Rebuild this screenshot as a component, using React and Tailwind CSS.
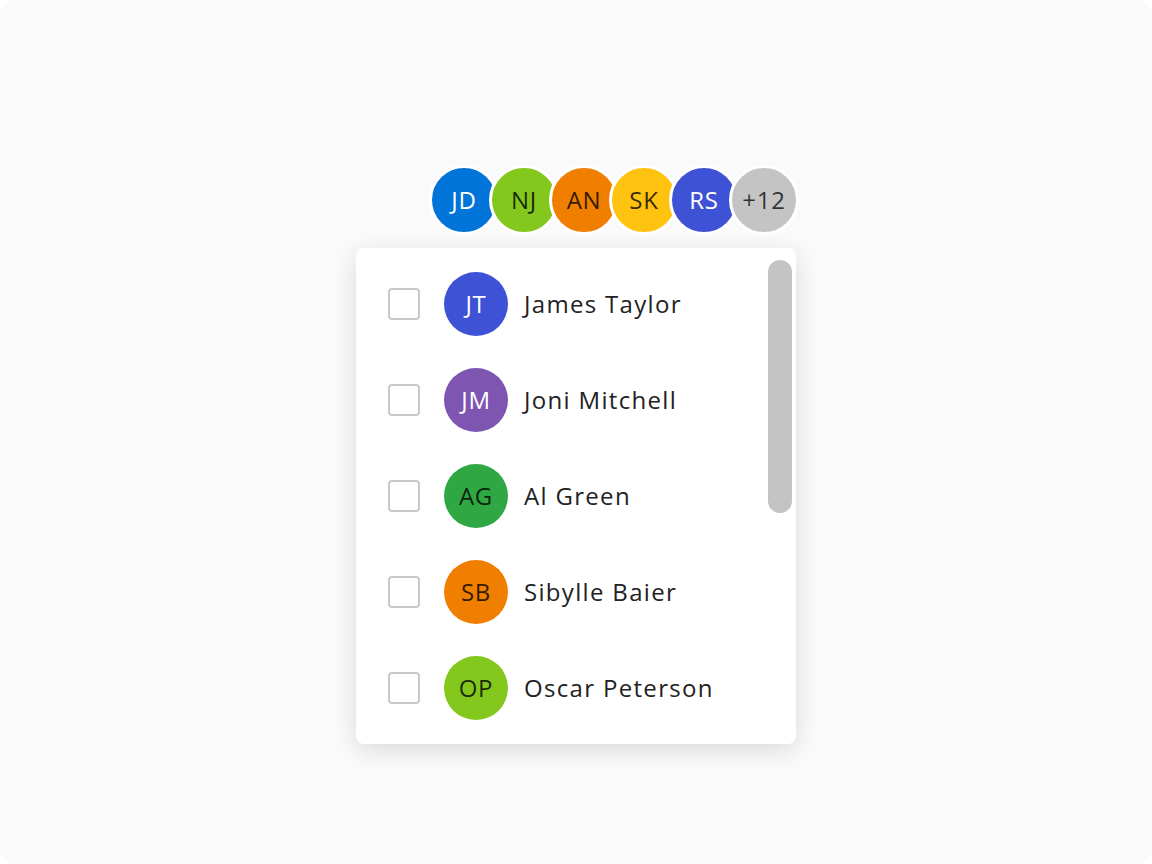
import React from "react";

const stack = [
  { initials: "JD", bg: "bg-[#0074d9]", fg: "text-white" },
  { initials: "NJ", bg: "bg-[#84c81e]", fg: "text-black/80" },
  { initials: "AN", bg: "bg-[#f07f00]", fg: "text-black/80" },
  { initials: "SK", bg: "bg-[#ffc20e]", fg: "text-black/80" },
  { initials: "RS", bg: "bg-[#3d52d5]", fg: "text-white" },
  { initials: "+12", bg: "bg-[#c4c4c4]", fg: "text-black/75" },
];

const people = [
  { name: "James Taylor", initials: "JT", bg: "bg-[#3d52d5]", fg: "text-white" },
  { name: "Joni Mitchell", initials: "JM", bg: "bg-[#7e56b1]", fg: "text-white" },
  { name: "Al Green", initials: "AG", bg: "bg-[#2fa844]", fg: "text-black/80" },
  { name: "Sibylle Baier", initials: "SB", bg: "bg-[#f07f00]", fg: "text-black/80" },
  { name: "Oscar Peterson", initials: "OP", bg: "bg-[#84c81e]", fg: "text-black/80" },
];

export default function App() {
  return (
    <div className="bg-white w-[1152px] h-[864px]">
      <div
        className="w-full h-full bg-[#fafafa] rounded-2xl flex justify-center pt-[165px]"
        style={{ fontFamily: '"Open Sans", "Noto Sans", sans-serif' }}
      >
        <div className="w-[440px] flex flex-col">
          {/* AVATAR STACK */}
          <div className="flex justify-end -mr-[3px]">
            {stack.map((a, i) => (
              <div
                key={a.initials}
                className={`w-[70px] h-[70px] rounded-full border-[3px] border-white flex items-center justify-center text-[24px] tracking-[0.03em] ${a.bg} ${a.fg} ${i === 0 ? "" : "-ml-[10px]"}`}
              >
                {a.initials}
              </div>
            ))}
          </div>

          {/* DROPDOWN */}
          <div className="mt-[13px] bg-white rounded-lg shadow-[0_6px_24px_rgba(0,0,0,0.13)] flex py-2 pl-8 pr-1">
            <div className="flex-1 flex flex-col">
              {people.map((p) => (
                <div key={p.name} className="h-24 flex items-center">
                  <div className="w-8 h-8 rounded border-2 border-[#c8c8c8]" />
                  <div
                    className={`ml-6 w-16 h-16 rounded-full flex items-center justify-center text-[24px] tracking-[0.03em] ${p.bg} ${p.fg}`}
                  >
                    {p.initials}
                  </div>
                  <div className="ml-4 text-[24px] tracking-[0.055em] text-[#222]">
                    {p.name}
                  </div>
                </div>
              ))}
            </div>
            <div className="pt-1">
              <div className="w-6 h-[253px] rounded-full bg-[#c4c4c4]" />
            </div>
          </div>
        </div>
      </div>
    </div>
  );
}
